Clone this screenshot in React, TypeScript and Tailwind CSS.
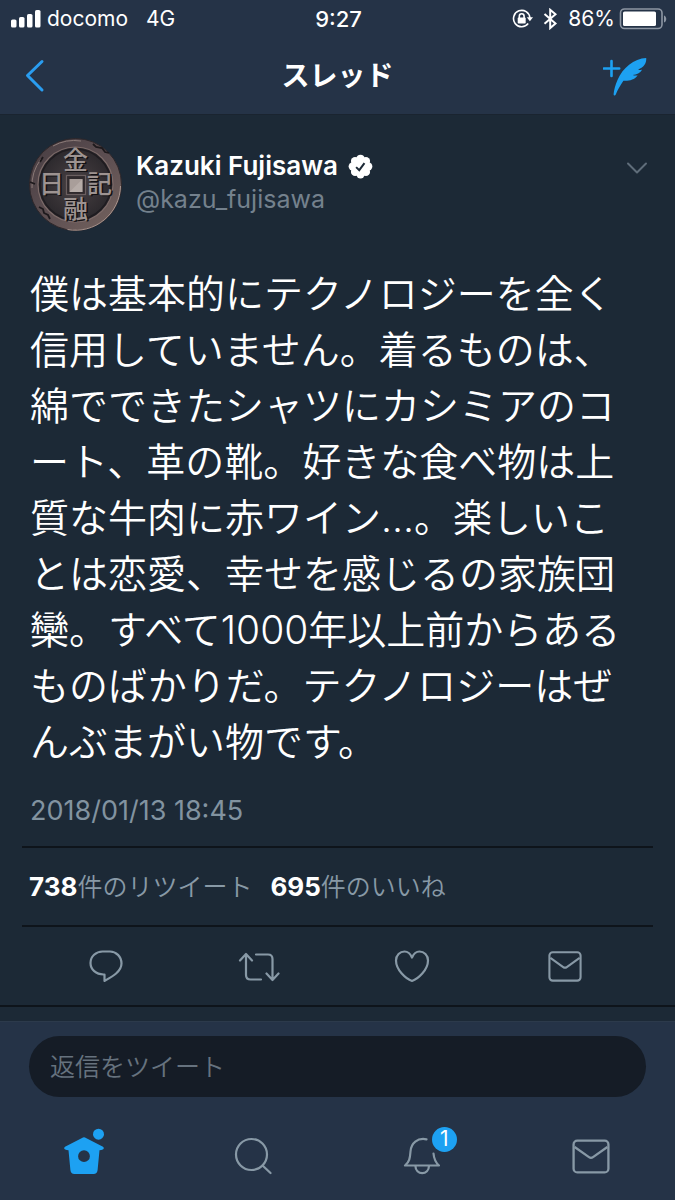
import React from "react";

const LINES = [
  "僕は基本的にテクノロジーを全く",
  "信用していません。着るものは、",
  "綿でできたシャツにカシミアのコ",
  "ート、革の靴。好きな食べ物は上",
  "質な牛肉に赤ワイン…。楽しいこ",
  "とは恋愛、幸せを感じるの家族団",
  "欒。すべて1000年以上前からある",
  "ものばかりだ。テクノロジーはぜ",
  "んぶまがい物です。",
];

function StatusBar() {
  return (
    <div className="grid h-[37px] grid-cols-[1fr_auto_1fr] items-center pr-2 pl-[10px] text-[21px] leading-6 text-white">
      <div className="flex items-center gap-[6px]">
        <svg width="31" height="18" viewBox="0 0 31 18" fill="#fff" aria-hidden="true">
          <rect x="1" y="9.5" width="5.5" height="8" rx="1.6" />
          <rect x="9" y="7" width="5.5" height="10.5" rx="1.6" />
          <rect x="17" y="4" width="5.5" height="13.5" rx="1.6" />
          <rect x="25" y="0" width="5.5" height="17.5" rx="1.6" />
        </svg>
        <span className="flex gap-[18px]">
          <span>docomo</span>
          <span>4G</span>
        </span>
      </div>
      <div className="text-center text-[22px] font-medium">9:27</div>
      <div className="flex items-center justify-end">
        <svg width="22" height="20" viewBox="0 0 22 20" fill="none" stroke="#fff" strokeWidth="1.6" aria-hidden="true">
          <path d="M16.2 14.6A8.2 8.2 0 1 1 17.9 9" />
          <path d="M14.8 8.2h6.2l-3.1 4z" fill="#fff" stroke="none" />
          <rect x="5.7" y="8.6" width="8" height="6" rx="0.8" fill="#fff" stroke="none" />
          <path d="M7.3 9V7.2a2.4 2.4 0 0 1 4.8 0V9" />
        </svg>
        <svg className="ml-2" width="16" height="22" viewBox="0 0 16 22" fill="none" stroke="#fff" strokeWidth="2" aria-hidden="true">
          <path d="M2.5 6l11 9.5-5.3 4.6V1.8l5.3 4.5-11 9.5" />
        </svg>
        <span className="ml-[10px]">86%</span>
        <svg className="ml-1 -mr-[2px]" width="50" height="22" viewBox="0 0 50 22" aria-hidden="true">
          <rect x="1.5" y="1" width="41.5" height="19.5" rx="4" fill="none" stroke="#8d96a3" strokeWidth="1.6" />
          <rect x="4" y="3.5" width="33" height="14.5" rx="1.6" fill="#fff" />
          <path d="M45 7.5c3 1 3 6 0 7z" fill="#8d96a3" />
        </svg>
      </div>
    </div>
  );
}

function Avatar() {
  return (
    <svg className="shrink-0" width="93" height="93" viewBox="0 0 93 93" role="img" aria-label="Kazuki Fujisawa">
      <defs>
        <linearGradient id="rim" x1="0" y1="0" x2="1" y2="1">
          <stop offset="0" stopColor="#463c41" />
          <stop offset="0.5" stopColor="#5c4e51" />
          <stop offset="1" stopColor="#76645f" />
        </linearGradient>
        <radialGradient id="face">
          <stop offset="0" stopColor="#4a4245" />
          <stop offset="1" stopColor="#2b282c" />
        </radialGradient>
      </defs>
      <circle cx="46.5" cy="46.5" r="46" fill="url(#rim)" stroke="#2d2629" strokeWidth="1" />
      <path d="M3 50a44 44 0 0 1 9-29M24 8a44 44 0 0 1 28-5" stroke="#8b7a77" strokeWidth="1" fill="none" />
      <path d="M91.5 48a45 45 0 0 1-53 43.5" stroke="#a9958f" strokeWidth="1" fill="none" />
      <path d="M64 6l3 3 6 1 3 4 4 1M1 44l5 2M10 69l4 2 1 4 4 2 2 4M14 19l-3 5" stroke="#1d191c" strokeWidth="1.8" fill="none" />
      <circle cx="46.5" cy="46.5" r="37.5" fill="url(#face)" stroke="#7d6b69" strokeWidth="1.2" />
      <circle cx="46.5" cy="46.5" r="35.5" fill="none" stroke="#1f1c20" strokeWidth="1.6" />
      <g fontFamily="'Noto Sans CJK JP', sans-serif" fontWeight="500" textAnchor="middle">
        <g fill="#121013">
          <text x="48" y="32" fontSize="25">金</text>
          <text x="24" y="56" fontSize="25">日</text>
          <text x="72" y="56" fontSize="25">記</text>
          <text x="48" y="81" fontSize="25">融</text>
        </g>
        <g fill="#9d9391">
          <text x="46.5" y="31" fontSize="25">金</text>
          <text x="22.5" y="55" fontSize="25">日</text>
          <text x="70.5" y="55" fontSize="25">記</text>
          <text x="46.5" y="80" fontSize="25">融</text>
        </g>
      </g>
      <rect x="37.5" y="37.5" width="19" height="19" fill="#302a2d" stroke="#6b5f60" strokeWidth="1.2" />
      <rect x="40.5" y="41" width="13" height="13" fill="#a99e9a" />
      <path d="M53.5 41v13h-13z" fill="#c4bab5" opacity="0.5" />
    </svg>
  );
}

function Envelope({ size }: { size: number }) {
  return (
    <svg width={size} height={size} viewBox="0 0 36 36" fill="none" stroke="#8899a6" strokeWidth="2.2" strokeLinejoin="round" aria-hidden="true">
      <rect x="1.5" y="3.5" width="33" height="30" rx="3.5" />
      <path d="M2.5 9.5l13.6 9.6a3.3 3.3 0 0 0 3.8 0L33.5 9.5" />
    </svg>
  );
}

const actionIcon = {
  width: 42,
  height: 36,
  viewBox: "0 0 42 36",
  fill: "none",
  stroke: "#8899a6",
  strokeWidth: 2.2,
  strokeLinecap: "round" as const,
  strokeLinejoin: "round" as const,
  "aria-hidden": true,
};

export default function App() {
  return (
    <div className="flex min-h-screen flex-col bg-[#1c2936] font-['Inter','Noto_Sans_CJK_JP',sans-serif]">
      <header className="border-b border-[#1a2430] bg-[#253347]">
        <StatusBar />
        <div className="grid h-[77px] grid-cols-3 items-center px-6">
          <button type="button" aria-label="戻る" className="justify-self-start">
            <svg width="22" height="34" viewBox="0 0 22 34" fill="none" stroke="#2a9df0" strokeWidth="3" strokeLinecap="round" strokeLinejoin="round" aria-hidden="true">
              <path d="M18 2.5L3.5 16.500 18 31" />
            </svg>
          </button>
          <h1 className="text-center text-[28px] leading-8 font-bold text-white">スレッド</h1>
          <button type="button" aria-label="ツイートする" className="justify-self-end">
            <svg width="48" height="42" viewBox="0 0 48 42" aria-hidden="true">
              <path d="M8.5 6v15M.8 13.5h15.4" stroke="#1da1f2" strokeWidth="2.6" strokeLinecap="round" />
              <path d="M43.2 3C31 3.6 19.5 13 14.5 25c-2.2 5.3-3.6 10-3.9 14.2 0 1.6 1.6 1.9 2.2.3 1.6-4.2 4.2-8.6 7.6-13.8 5.6.4 11-1 14.3-5.3-1.800.2-3.600.1-5-.4 4.200-.2 7.300-2 9.400-5.200-1.500.2-2.800.1-4-.4C41 12.300 43.700 8 43.200 3z" fill="#1da1f2" />
            </svg>
          </button>
        </div>
      </header>

      <main className="flex-1">
        <article className="border-b-2 border-[#0e141b]">
          <div className="flex items-start gap-[14px] px-[29px] pt-[23px]">
            <Avatar />
            <div className="flex-1 pt-3">
              <div className="flex items-center gap-[10px]">
                <h2 className="text-[26px] leading-8 font-semibold text-white">Kazuki Fujisawa</h2>
                <svg width="25" height="25" viewBox="0 0 24 24" role="img" aria-label="認証済み">
                  <g fill="#fff">
                    <circle cx="12" cy="12" r="9" />
                    <circle cx="12" cy="4.6" r="4" />
                    <circle cx="17.2" cy="6.8" r="4" />
                    <circle cx="19.4" cy="12" r="4" />
                    <circle cx="17.2" cy="17.2" r="4" />
                    <circle cx="12" cy="19.4" r="4" />
                    <circle cx="6.8" cy="17.2" r="4" />
                    <circle cx="4.6" cy="12" r="4" />
                    <circle cx="6.8" cy="6.8" r="4" />
                  </g>
                  <path d="M7.8 12.6l3 2.9 5-6.8" fill="none" stroke="#1c2936" strokeWidth="1.9" />
                </svg>
              </div>
              <p className="text-[25px] leading-[34px] text-[#74818d]">@kazu_fujisawa</p>
            </div>
            <button type="button" aria-label="メニュー" className="pt-6">
              <svg width="18" height="12" viewBox="0 0 18 12" className="overflow-visible" fill="none" stroke="#5f6d7a" strokeWidth="2" strokeLinecap="round" strokeLinejoin="round" aria-hidden="true">
                <path d="M0 1.5l9 9 9-9" />
              </svg>
            </button>
          </div>

          <p className="mt-[35px] px-[30px] text-[39px] leading-[56px] font-[350] whitespace-nowrap text-white">
            {LINES.map((line) => (
              <React.Fragment key={line}>
                {line}
                <br />
              </React.Fragment>
            ))}
          </p>
          <time className="mt-[25px] block px-[30px] text-[27px] leading-8 text-[#8293a0]">2018/01/13 18:45</time>

          <div className="mx-[22px] mt-[19px] border-y-2 border-[#0e141b] px-[7px]">
            <div className="flex h-[77px] items-center gap-[18px] text-[25px] leading-8 font-[350] text-[#8899a6]">
              <a href="#retweets"><strong className="text-[26px] font-bold text-white">738</strong>件のリツイート</a>
              <a href="#likes"><strong className="text-[26px] font-bold text-white">695</strong>件のいいね</a>
            </div>
          </div>

          <div className="grid h-[78px] grid-cols-4 items-center justify-items-center pr-[33px] pl-[29px]">
            <button type="button" aria-label="返信">
              <svg {...actionIcon}>
                <path d="M18.5 26.5h1v6.5c8-4.5 17-9.500 17-17.500 0-7-5.500-12-11.500-12h-7.500c-6.500 0-12 5-12 11.500s5.500 11.500 13 11.500z" />
              </svg>
            </button>
            <button type="button" aria-label="リツイート">
              <svg {...actionIcon}>
                <path d="M2 12.5l6-6.5 6 6.5M8 6.500V27c0 3 1.500 4.500 4.500 4.500H23M18 6.500h12c3 0 4.500 1.500 4.500 4.500v20.500M28.500 25.500l6 6.500 6-6.500" />
              </svg>
            </button>
            <button type="button" aria-label="いいね">
              <svg {...actionIcon}>
                <path d="M21 33C15 31 5 22 5 12.500 5 7 9 3.500 13.500 3.500c3.500 0 6 2.500 7.500 6 1.500-3.500 4-6 7.500-6C33 3.500 37 7 37 12.500 37 22 27 31 21 33z" />
              </svg>
            </button>
            <button type="button" aria-label="ダイレクトメッセージ"><Envelope size={34} /></button>
          </div>
        </article>
      </main>

      <footer className="border-t border-[#2c3a4b] bg-[#253347] pt-[14px]">
        <div className="px-[29px]">
          <input
            type="text"
            aria-label="返信をツイート"
            placeholder="返信をツイート"
            className="block h-[61px] w-full rounded-full bg-[#151c26] px-[21px] text-[25px] font-[350] text-white outline-none placeholder:text-[#66727e]"
          />
        </div>
        <nav className="grid h-[103px] grid-cols-4 items-center justify-items-center pt-[14px]">
          <a href="#home" aria-label="ホーム" className="pb-2">
            <svg width="42" height="48" viewBox="0 0 42 48" fill="#1da1f2" aria-hidden="true">
              <path fillRule="evenodd" d="M20 9.500a2 2 0 0 1 2 0l18 9.200c1.200.7 1 2.300-.2 2.900-.9.400-2 .7-3.300.700L34.600 42c-.3 2.500-1.600 4-4 4H11.400c-2.400 0-3.700-1.500-4-4L5.500 22.300c-1.300 0-2.400-.3-3.300-.700C1 21 .8 19.400 2 18.700zM21 22.300a5.900 5.900 0 1 0 0 11.800 5.900 5.900 0 0 0 0-11.800z" />
              <circle cx="35.5" cy="6.2" r="5.5" />
            </svg>
          </a>
          <a href="#search" aria-label="検索">
            <svg width="38" height="38" viewBox="0 0 38 38" fill="none" stroke="#8899a6" strokeWidth="2.2" strokeLinecap="round" aria-hidden="true">
              <circle cx="17.5" cy="17.5" r="15.5" />
              <path d="M28.5 28.5l8 7.5" />
            </svg>
          </a>
          <a href="#notifications" aria-label="通知 1件" className="relative">
            <svg width="38" height="38" viewBox="0 0 38 38" fill="none" stroke="#8899a6" strokeWidth="2.2" strokeLinecap="round" strokeLinejoin="round" aria-hidden="true">
              <path d="M23.5 2.3C14.500.5 8 6 7.500 14.500 7 21 6.500 25 2 28.500h34c-3.500-3-5-6.500-5.500-12M12.500 29.500a6.700 6.700 0 0 0 13.400 0" />
            </svg>
            <span className="absolute -top-[10px] left-[29px] flex size-[25px] items-center justify-center rounded-full bg-[#1da1f2] text-[21px] leading-6 text-white">1</span>
          </a>
          <a href="#messages" aria-label="メッセージ"><Envelope size={38} /></a>
        </nav>
      </footer>
    </div>
  );
}
